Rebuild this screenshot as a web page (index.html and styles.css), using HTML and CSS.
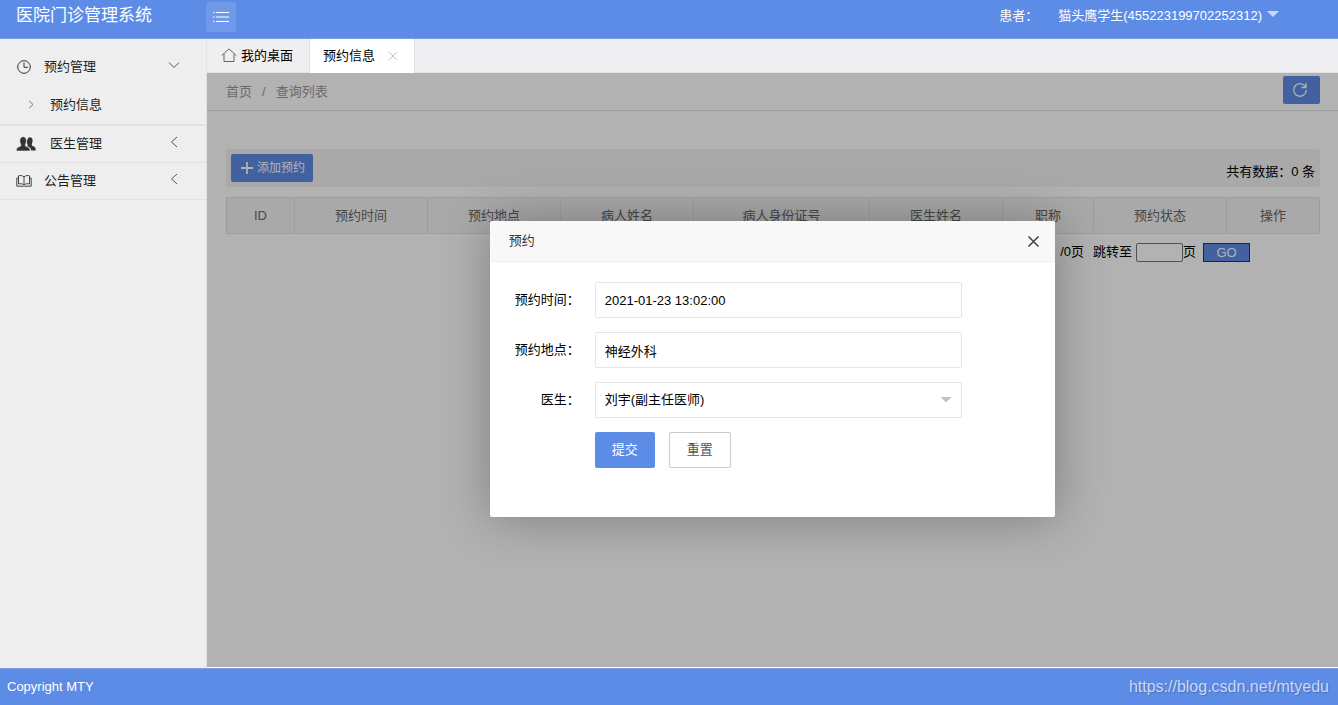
FILE: index.html
```html
<!DOCTYPE html>
<html lang="zh-CN">
<head>
<meta charset="utf-8">
<title>医院门诊管理系统</title>
<link rel="stylesheet" href="styles.css">
</head>
<body>
<header class="topbar">
  <h1 class="brand">医院门诊管理系统</h1>
  <button class="menu-toggle" type="button" aria-label="切换菜单">
    <svg width="18" height="12" viewBox="0 0 18 12" fill="none" stroke="currentColor" stroke-width="1.2"><path d="M4 1.500h13M4 6h13M4 10.500h13M1 1.500h1.500M1 6h1.500M1 10.500h1.500"/></svg>
  </button>
  <div class="account">
    <span>患者：</span>
    <a class="user" href="#">猫头鹰学生(455223199702252312)
      <svg width="12" height="6" viewBox="0 0 12 6"><path d="M0 0h12L6 6z" fill="#cbdaf7"/></svg></a>
  </div>
</header>

<div class="layout">
  <nav class="sidebar">
    <div class="group group-open">
      <a class="item" href="#">
        <svg class="icon" width="16" height="16" viewBox="0 0 16 16" fill="none" stroke="currentColor" stroke-width="1"><circle cx="8" cy="8" r="6.3"/><path d="M8 3.500V8.300h4"/></svg>
        <span>预约管理</span>
        <svg class="arrow" width="12" height="12" viewBox="0 0 12 12" fill="none" stroke="currentColor"><path d="M1 3.500l5 5 5-5"/></svg>
      </a>
      <a class="subitem" href="#">
        <svg width="6" height="9" viewBox="0 0 6 9" fill="none" stroke="currentColor"><path d="M1 .8l4 3.700-4 3.700"/></svg>
        <span>预约信息</span>
      </a>
    </div>
    <div class="group">
      <a class="item" href="#">
        <svg class="icon icon-wide" width="20" height="16" viewBox="0 0 20 16" fill="currentColor"><path d="M10.500 10.200c1.500-.2 1.300-1 1.100-1.600C10.500 6.800 10.800 1.400 14 1.300c2.900.1 3.100 4 2 6.300-.5.900-.3 1.900.7 2.300 1.800.8 3 1 3.100 4.600h-4.600c-.1-2.600-1.800-3.300-3.600-4z"/><path d="M.3 15c0-3.400 1.500-3.700 3.600-4.500 1.200-.5 1.300-1.300.8-2.300C3.200 5.500 3.500.7 7.100.7s4 4.700 2.500 7.500c-.5 1-.4 1.900.8 2.300 2.100.8 3.700 1.200 3.900 4.500z" stroke="#eee" stroke-width=".6"/></svg>
        <span>医生管理</span>
        <svg class="arrow" width="12" height="12" viewBox="0 0 12 12" fill="none" stroke="currentColor"><path d="M9 1L3.500 6 9 11"/></svg>
      </a>
    </div>
    <div class="group">
      <a class="item" href="#">
        <svg class="icon" width="16" height="16" viewBox="0 0 16 16" fill="none" stroke="currentColor" stroke-width=".9"><path d="M8 4C6.500 2.300 4 2.300 2.500 2.800v8.200c1.500-.5 4-.5 5.500 1 1.500-1.500 4-1.500 5.500-1V2.800C12 2.300 9.500 2.300 8 4zM8 4v8M2.500 5H.8v8.200h6.400c.4.600 1.200.6 1.600 0h6.400V5h-1.700"/></svg>
        <span>公告管理</span>
        <svg class="arrow" width="12" height="12" viewBox="0 0 12 12" fill="none" stroke="currentColor"><path d="M9 1L3.500 6 9 11"/></svg>
      </a>
    </div>
  </nav>

  <main class="content">
    <div class="tabs">
      <a class="tab" href="#">
        <svg width="16" height="15" viewBox="0 0 16 15" fill="none" stroke="#666"><path d="M.7 7.500L8 .9l7.300 6.600M3 6v7.500h10V6"/></svg>
        <span>我的桌面</span>
      </a>
      <div class="tab tab-active">
        <span>预约信息</span>
        <button class="tab-close" type="button" aria-label="关闭标签">
          <svg width="10" height="10" viewBox="0 0 10 10" stroke="#c2c2c2" fill="none"><path d="M1 1l8 8M9 1L1 9"/></svg>
        </button>
      </div>
    </div>

    <section class="page">
      <div class="crumbbar">
        <div class="crumbs"><a href="#">首页</a><span>/</span><a href="#">查询列表</a></div>
        <button class="btn refresh" type="button" aria-label="刷新">
          <svg width="16" height="16" viewBox="0 0 16 16" fill="none" stroke="currentColor" stroke-width="1.300"><path d="M13.300 4.500A6.300 6.300 0 1 0 14.300 8M14 1v4.500H9.500"/></svg>
        </button>
      </div>

      <div class="body">
        <div class="toolbar">
          <button class="btn add" type="button">
            <svg width="12" height="12" viewBox="0 0 12 12" stroke="currentColor" stroke-width="1.800"><path d="M6 0v12M0 6h12"/></svg>
            <span>添加预约</span>
          </button>
          <span class="total">共有数据：0 条</span>
        </div>

        <table class="list">
          <colgroup>
            <col class="c-id"><col class="c-std"><col class="c-std"><col class="c-std"><col class="c-card"><col class="c-std"><col class="c-title"><col class="c-std"><col class="c-action">
          </colgroup>
          <thead>
            <tr><th>ID</th><th>预约时间</th><th>预约地点</th><th>病人姓名</th><th>病人身份证号</th><th>医生姓名</th><th>职称</th><th>预约状态</th><th>操作</th></tr>
          </thead>
        </table>

        <form class="pager">
          <span>/0页</span>
          <label class="jump" for="page-no">跳转至</label>
          <input id="page-no" class="page-no" type="text">
          <span>页</span>
          <button class="go" type="button">GO</button>
        </form>
      </div>

      <div class="shade">
        <div class="dialog" role="dialog" aria-labelledby="dialog-title">
          <div class="dialog-head">
            <h2 id="dialog-title" class="dialog-title">预约</h2>
            <button class="dialog-close" type="button" aria-label="关闭">
              <svg width="13" height="13" viewBox="0 0 13 13" stroke="#454552" stroke-width="1.600" fill="none"><path d="M1.500 1.500l10 10M11.500 1.500l-10 10"/></svg>
            </button>
          </div>
          <form class="form">
            <label for="time">预约时间：</label>
            <input id="time" class="field" type="text" value="2021-01-23 13:02:00">
            <label for="place">预约地点：</label>
            <input id="place" class="field" type="text" value="神经外科">
            <label for="doctor">医生：</label>
            <div class="select">
              <select id="doctor" class="field"><option>刘宇(副主任医师)</option></select>
              <svg class="caret" width="12" height="6" viewBox="0 0 12 6"><path d="M.5 0h11L6 5.500z" fill="#c2c2c2"/></svg>
            </div>
            <div class="actions">
              <button class="btn submit" type="button">提交</button>
              <button class="reset" type="reset">重置</button>
            </div>
          </form>
        </div>
      </div>
    </section>
  </main>
</div>

<footer class="footer">
  <span>Copyright MTY</span>
  <a class="link" href="#">https://blog.csdn.net/mtyedu</a>
</footer>
</body>
</html>
```

FILE: styles.css
```css
* { box-sizing: border-box; }

body {
  margin: 0;
  min-height: 100vh;
  display: flex;
  flex-direction: column;
  font: 13px/20px "Liberation Sans", "Noto Sans CJK SC", sans-serif;
  color: #000;
  background: #fff;
}

a { color: inherit; text-decoration: none; }
svg { display: block; flex: none; }
button, input, select { font: inherit; color: inherit; margin: 0; }
button { border: 0; padding: 0; background: none; cursor: pointer; }

.topbar {
  display: flex;
  align-items: flex-start;
  height: 39px;
  background: #5d8ce6;
  border-bottom: 1px solid #7a9fe8;
  color: #fff;
}
.brand {
  width: 190px;
  margin: 0 0 0 16px;
  font-size: 17px;
  font-weight: 400;
  line-height: 32px;
}
.menu-toggle {
  display: flex;
  align-items: center;
  justify-content: center;
  width: 30px;
  height: 30px;
  margin-top: 2px;
  border-radius: 3px;
  background: #7099ea;
}
.account {
  display: flex;
  gap: 20px;
  margin-left: auto;
  padding-right: 59px;
  line-height: 32px;
}
.user { display: flex; gap: 5px; }
.user svg { margin-top: 11px; }

.layout { flex: 1; display: flex; }

.sidebar {
  width: 207px;
  flex: none;
  padding-top: 10px;
  background: #eee;
  border-right: 1px solid #e2e2e2;
  color: #222;
}
.group { border-bottom: 1px solid #e2e2e2; }
.group-open { border-bottom-width: 2px; }
.item, .subitem { display: flex; align-items: center; height: 36px; }
.item { padding: 0 26px 0 16px; }
.icon { margin-right: 12px; color: #333; }
.icon-wide { margin-right: 14px; }
.arrow { margin: 0 0 5px auto; color: #555; }
.subitem { height: 39px; padding-left: 28px; gap: 16px; }
.subitem svg { color: #777; }

.content { flex: 1; display: flex; flex-direction: column; min-width: 0; }

.tabs {
  display: flex;
  height: 34px;
  background: #efeef0;
  border-bottom: 1px solid #e2e2e2;
}
.tab {
  display: flex;
  align-items: center;
  gap: 4px;
  padding: 0 16px 0 14px;
  border-right: 1px solid #e2e2e2;
}
.tab-active {
  gap: 13px;
  padding: 0 16px 0 13px;
  margin-bottom: -1px;
  background: #fff;
}

.page {
  flex: 1;
  position: relative;
  display: flex;
  flex-direction: column;
  margin-bottom: 1px;
  background: #fff;
}
.crumbbar {
  display: flex;
  align-items: center;
  justify-content: space-between;
  height: 38px;
  padding: 0 18px 4px 19px;
  border-bottom: 1px solid #e5e5e5;
}
.crumbs { display: flex; gap: 10px; padding-top: 4px; color: #999; }

.btn {
  border-radius: 2px;
  background: #5d8ce6;
  color: #fff;
}
.refresh {
  display: flex;
  align-items: center;
  padding-left: 9px;
  width: 37px;
  height: 28px;
}

.body { padding: 38px 18px 20px 19px; }
.toolbar {
  display: flex;
  align-items: center;
  justify-content: space-between;
  padding: 5px;
  margin-bottom: 10px;
  border-radius: 2px;
  background: #f2f2f2;
}
.add {
  display: flex;
  align-items: center;
  gap: 4px;
  height: 28px;
  padding: 0 8px 0 10px;
  font-size: 12px;
}
.total { padding-top: 8px; }

.list {
  width: 100%;
  table-layout: fixed;
  border-collapse: collapse;
  background: #f2f2f2;
  color: #666;
}
.list th {
  height: 36px;
  padding: 0;
  border: 1px solid #e2e2e2;
  font-weight: 400;
}
.c-id { width: 68px; }
.c-std { width: 133px; }
.c-card { width: 176px; }
.c-title { width: 91px; }
.c-action { width: 93px; }

.pager {
  display: flex;
  align-items: center;
  justify-content: flex-end;
  padding: 8px 70px 0 0;
}
.jump { margin: 0 4px 0 9px; }
.page-no {
  width: 47px;
  height: 19px;
  border: 1px solid #767676;
  border-radius: 2px;
  background: #fff;
}
.go {
  width: 47px;
  height: 19px;
  margin-left: 7px;
  border: 1px solid #24365a;
  background: #5d8ce6;
  color: #fff;
  line-height: 17px;
}

.shade {
  position: absolute;
  inset: 0;
  display: flex;
  align-items: center;
  justify-content: center;
  padding-bottom: 2px;
  background: rgba(0, 0, 0, .3);
}
.dialog {
  width: 50%;
  min-height: 50%;
  border-radius: 2px;
  background: #fff;
  box-shadow: 1px 1px 50px rgba(0, 0, 0, .3);
}
.dialog-head {
  display: flex;
  align-items: center;
  justify-content: space-between;
  height: 41px;
  padding: 0 15px 0 19px;
  border-bottom: 1px solid #eee;
  background: #f8f8f8;
  border-radius: 2px 2px 0 0;
}
.dialog-title { margin: 0; font-size: 13px; font-weight: 400; color: #333; }

.form {
  display: grid;
  grid-template-columns: 90px 65%;
  gap: 14px 15px;
  align-items: center;
  padding-top: 20px;
}
.form label { text-align: right; }
.field {
  display: block;
  width: 100%;
  height: 36px;
  padding: 0 9px;
  border: 1px solid #e6e6e6;
  border-radius: 2px;
  background: #fff;
  appearance: none;
}
.select { position: relative; }
.caret { position: absolute; right: 10px; top: 15px; pointer-events: none; }
.actions { grid-column: 2; display: flex; gap: 14px; }
.submit { width: 60px; height: 36px; }
.reset {
  width: 62px;
  height: 36px;
  border: 1px solid #c9c9c9;
  border-radius: 2px;
  background: #fff;
  color: #555;
}

.footer {
  display: flex;
  align-items: center;
  justify-content: space-between;
  height: 37px;
  padding: 0 9px 0 7px;
  border-top: 1px solid #7a9fe8;
  background: #5d8ce6;
  color: #fff;
}
.link {
  font-size: 16px;
  color: #c9d8f6;
  text-shadow: 1px 1px 1px rgba(0, 0, 0, .2);
}
```
